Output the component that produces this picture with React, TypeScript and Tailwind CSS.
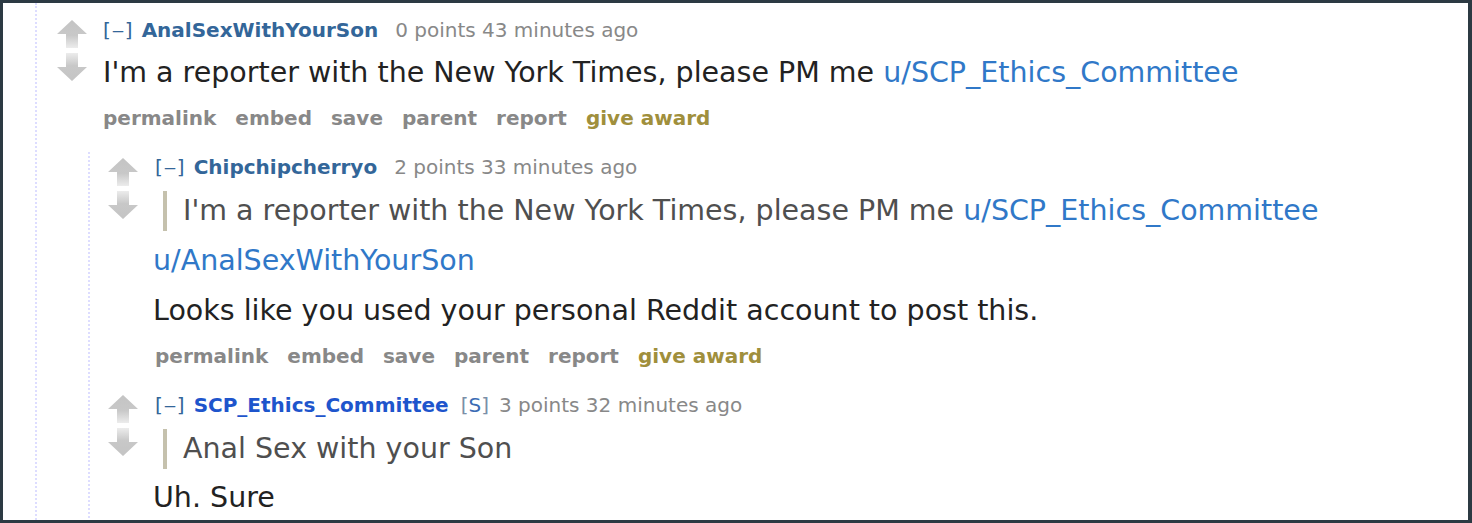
import React from "react";

function Arrows() {
  return (
    <svg width="32" height="62" viewBox="0 0 32 62" className="block">
      <defs>
        <linearGradient id="gu" x1="0" y1="0" x2="0" y2="1">
          <stop offset="0" stopColor="#c4c4c4" />
          <stop offset="0.55" stopColor="#c8c8c8" />
          <stop offset="1" stopColor="#ececec" />
        </linearGradient>
        <linearGradient id="gd" x1="0" y1="1" x2="0" y2="0">
          <stop offset="0" stopColor="#c4c4c4" />
          <stop offset="0.55" stopColor="#c8c8c8" />
          <stop offset="1" stopColor="#ececec" />
        </linearGradient>
      </defs>
      <path d="M16 0 L31 14 L22 14 L22 28 L10 28 L10 14 L1 14 Z" fill="url(#gu)" />
      <path d="M16 61 L31 47 L22 47 L22 33 L10 33 L10 47 L1 47 Z" fill="url(#gd)" />
    </svg>
  );
}

const font = "font-['DejaVu_Sans','Verdana',sans-serif]";

function Tagline({ user, userClass, points, time, submitter }: { user: string; userClass: string; points: string; time: string; submitter?: boolean }) {
  return (
    <div className="h-[24px] text-[20px] leading-[24px] text-[#888] whitespace-nowrap">
      <span className="text-[#369]">
        [<span className="inline-block scale-x-[1.3] mx-[2px]">–</span>]
      </span>
      <span className="ml-[9px]" />
      <span className={`font-bold ${userClass}`}>{user}</span>
      {submitter ? (
        <>
          <span className="ml-[12px] text-[#7a8fa8]">[</span>
          <span className="text-[#3b6cb4]">S</span>
          <span className="text-[#7a8fa8] mr-[10px]">]</span>
        </>
      ) : (
        <span className="mr-[17px]" />
      )}
      {points} {time}
    </div>
  );
}

function Actions() {
  return (
    <div className="flex gap-[19px] h-[24px] text-[20px] leading-[24px] font-bold text-[#888] whitespace-nowrap">
      <span>permalink</span>
      <span>embed</span>
      <span>save</span>
      <span>parent</span>
      <span>report</span>
      <span className="text-[#a08f3c]">give award</span>
    </div>
  );
}

function Quote({ children }: { children: React.ReactNode }) {
  return (
    <div className="flex">
      <div className="w-[4px] bg-[#c5c1ad] ml-[10px]" />
      <div className="pl-[16px] text-[#4f4f4f]">{children}</div>
    </div>
  );
}

const body = "text-[28.5px] leading-[40px] text-[#222]";
const link = "text-[#3078c8]";

export default function App() {
  return (
    <div className={`${font} w-[1472px] h-[523px] bg-white border-t-[3px] border-l-[3px] border-b-[3px] border-r-[4px] border-[#2c3a43] overflow-hidden`}>
      <div className="ml-[32px] border-l-2 border-dotted border-[#ddf] h-full pl-[19px] pt-[15px]">
        <div className="flex">
          <div className="w-[32px] pt-[2px]"><Arrows /></div>
          <div className="ml-[15px] flex-1">
            <Tagline user="AnalSexWithYourSon" userClass="text-[#369]" points="0 points" time="43 minutes ago" />
            <div className={`${body} mt-[11px]`}>
              I'm a reporter with the New York Times, please PM me <span className={link}>u/SCP_Ethics_Committee</span>
            </div>
            <div className="mt-[13px]"><Actions /></div>
          </div>
        </div>
        <div className="ml-[32px] border-l-2 border-dotted border-[#ddf] pl-[17px] pt-[3px] mt-[22px] h-full">
          <div className="flex">
            <div className="w-[32px] pt-[3px]"><Arrows /></div>
            <div className="ml-[16px] flex-1">
              <Tagline user="Chipchipcherryo" userClass="text-[#369]" points="2 points" time="33 minutes ago" />
              <div className={`${body} mt-[12px] -ml-[2px]`}>
                <Quote>
                  I'm a reporter with the New York Times, please PM me <span className={link}>u/SCP_Ethics_Committee</span>
                </Quote>
                <div className={`mt-[10px] ${link}`}>u/AnalSexWithYourSon</div>
                <div className="mt-[10px]">Looks like you used your personal Reddit account to post this.</div>
              </div>
              <div className="mt-[13px]"><Actions /></div>
            </div>
          </div>
          <div className="flex mt-[25px]">
            <div className="w-[32px] pt-[2px]"><Arrows /></div>
            <div className="ml-[16px] flex-1">
              <Tagline user="SCP_Ethics_Committee" userClass="text-[#1e55cc]" points="3 points" time="32 minutes ago" submitter />
              <div className={`${body} mt-[12px] -ml-[2px]`}>
                <Quote>Anal Sex with your Son</Quote>
                <div className="mt-[9px]">Uh. Sure</div>
              </div>
            </div>
          </div>
        </div>
      </div>
    </div>
  );
}
